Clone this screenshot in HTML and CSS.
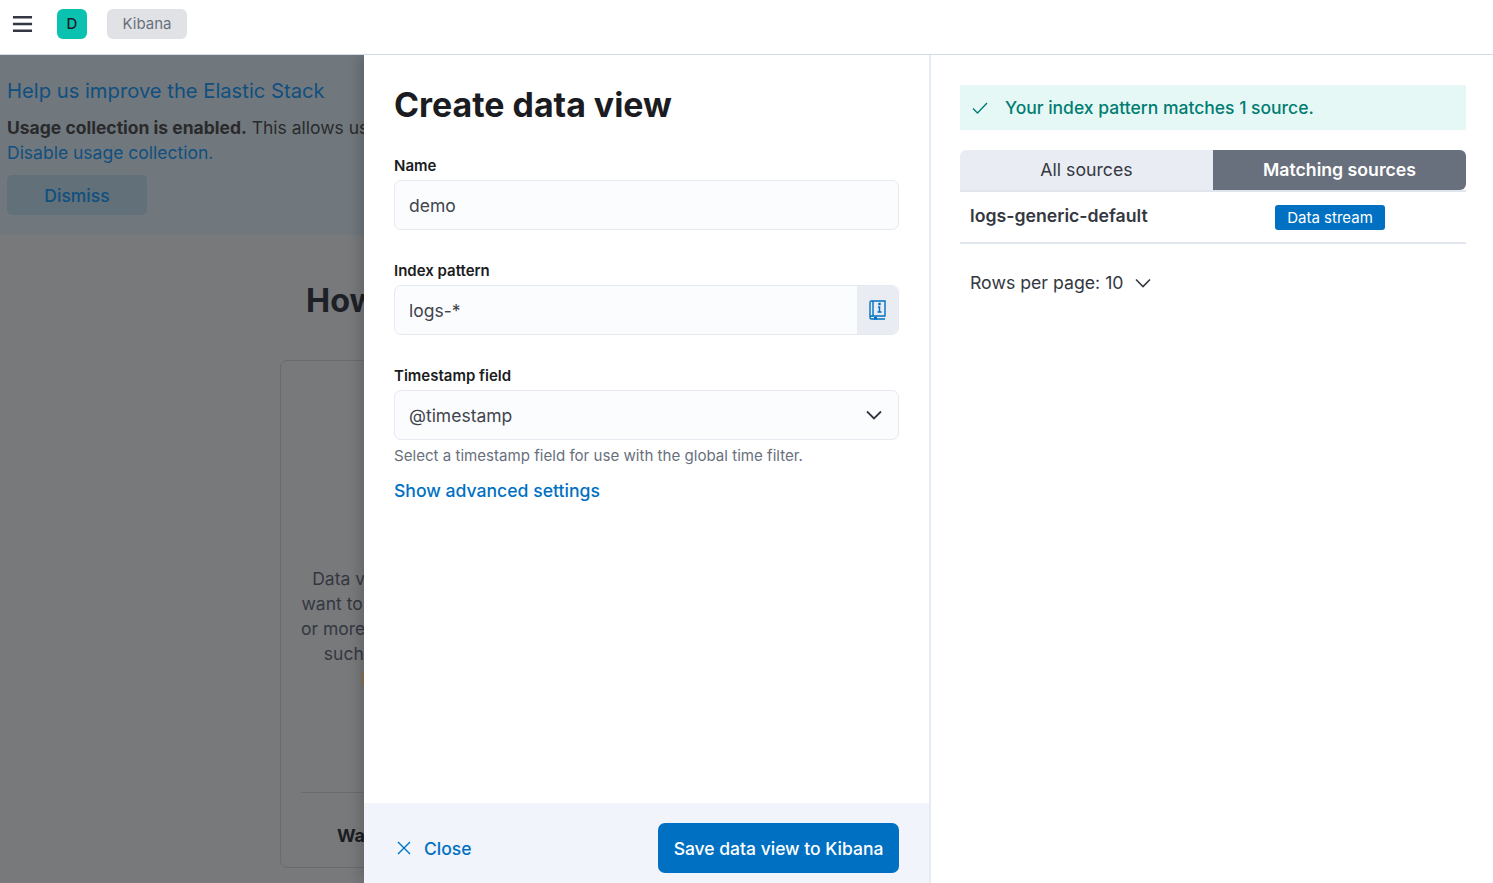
FILE: index.html
```html
<!DOCTYPE html>
<html>
<head>
  <meta charset="UTF-8">
  <meta name="viewport" content="width=device-width,initial-scale=1">
  <title>Create data view</title>
  <link rel="stylesheet" href="styles.css">
</head>
<body>
  <header class="topbar">
    <svg class="menuicon" width="22" height="18" viewBox="0 0 22 18">
      <path d="M1 2h20M1 9h20M1 16h20" stroke="#343741" stroke-width="2.6" fill="none"/>
    </svg>
    <div class="avatar">D</div>
    <div class="crumb">Kibana</div>
  </header>

  <div class="pagewrap">
    <!-- page behind the flyout, dimmed -->
    <main class="page">
      <section class="usagecallout">
        <h3 class="usagetitle">Help us improve the Elastic Stack</h3>
        <p class="usagetext"><b>Usage collection is enabled.</b> This allows us to learn what our users are most interested in, so we can improve our products and services.<br>
        <a class="usagelink">Disable usage collection.</a></p>
        <button class="dismiss">Dismiss</button>
      </section>
      <section class="intro">
        <h1 class="introtitle">How do you want to start</h1>
        <div class="introcard">
          <p class="introtext">Data views identify the Elasticsearch data you<br>want to explore. You can point data views to one<br>or more data streams, indices, and index aliases,<br>such as your log data from yesterday, or all<br><a class="introlink">indices that contain your log data.</a></p>
          <div class="introfoot"><b>Want to learn more about data views?</b></div>
        </div>
      </section>
    </main>

    <!-- flyout -->
    <aside class="flyout">
      <div class="formside">
        <div class="formbody">
          <h1 class="formtitle">Create data view</h1>

          <div class="field">
            <label class="fieldlabel">Name</label>
            <div class="control"><input class="textinput" type="text" value="demo"></div>
          </div>

          <div class="field">
            <label class="fieldlabel">Index pattern</label>
            <div class="control">
              <input class="textinput" type="text" value="logs-*">
              <div class="append">
                <svg width="20" height="22" viewBox="0 0 20 22" fill="none" stroke="#0071c2" stroke-width="1.4">
                  <path d="M3 18V3.500C3 2.500 3.700 2 4.500 2H18v15H4.500C3.700 17 3 17.500 3 18.500S3.700 20 4.500 20H18"/>
                  <path d="M6 2v15"/>
                  <path d="M11 8h1.500v5M10.500 13h4" stroke-width="1.500"/>
                  <path d="M12 4.500h1v1h-1z" fill="#0071c2"/>
                  <path d="M7 18h3v3l-1.500-1-1.500 1z" fill="#0071c2" stroke="none"/>
                </svg>
              </div>
            </div>
          </div>

          <div class="field">
            <label class="fieldlabel">Timestamp field</label>
            <div class="control">
              <input class="textinput" type="text" value="@timestamp">
              <svg class="selectchevron" width="16" height="10" viewBox="0 0 16 10">
                <path d="M1 1.500l7 7 7-7" stroke="#343741" stroke-width="1.800" fill="none"/>
              </svg>
            </div>
            <div class="fieldhelp">Select a timestamp field for use with the global time filter.</div>
          </div>

          <a class="advancedlink">Show advanced settings</a>
        </div>

        <footer class="formfoot">
          <a class="closelink">
            <svg width="14" height="14" viewBox="0 0 14 14">
              <path d="M1 1l12 12M13 1L1 13" stroke="#0071c2" stroke-width="1.400" fill="none"/>
            </svg>
            Close
          </a>
          <button class="savebtn">Save data view to Kibana</button>
        </footer>
      </div>

      <div class="sourceside">
        <div class="matchcallout">
          <svg width="16" height="12" viewBox="0 0 16 12">
            <path d="M1 6.500l4.500 4.500L15 1" stroke="#017d73" stroke-width="1.400" fill="none"/>
          </svg>
          Your index pattern matches 1 source.
        </div>

        <div class="tabs">
          <div class="tab">All sources</div>
          <div class="tab selected">Matching sources</div>
        </div>

        <div class="sourcerow">
          <div class="sourcename">logs-generic-default</div>
          <div class="sourcetype"><span class="badge">Data stream</span></div>
        </div>

        <div class="rowsperpage">
          Rows per page: 10
          <svg width="16" height="10" viewBox="0 0 16 10">
            <path d="M1 1.500l7 7 7-7" stroke="#343741" stroke-width="1.600" fill="none"/>
          </svg>
        </div>
      </div>
    </aside>
  </div>
</body>
</html>
```

FILE: styles.css
```css
html, body {
  margin: 0;
  height: 100%;
}

body {
  font-family: "Inter", "Liberation Sans", sans-serif;
  font-size: 17.5px;
  color: #343741;
  background: #fff;
  overflow: hidden;
}

p, h1, h3 {
  margin: 0;
}

/* top bar */

.topbar {
  height: 55px;
  box-sizing: border-box;
  display: flex;
  align-items: center;
  padding: 0 0 6px 12px;
  background: #fff;
  border-bottom: 1px solid #d3dae6;
}

.menuicon {
  width: 21px;
  margin-right: 24px;
}

.avatar {
  width: 30px;
  height: 30px;
  margin-right: 20px;
  border-radius: 6px;
  background: #0bc1b0;
  color: #1a1c21;
  font-size: 15px;
  font-weight: 500;
  line-height: 30px;
  text-align: center;
}

.crumb {
  width: 80px;
  height: 30px;
  border-radius: 6px;
  background: #e1e2e6;
  color: #69707d;
  font-size: 15px;
  line-height: 30px;
  text-align: center;
}

/* page behind the flyout */

.pagewrap {
  position: relative;
  height: 828px;
  overflow: hidden;
}

.page {
  height: 100%;
  background: #78797b;
}

.usagecallout {
  height: 180px;
  box-sizing: border-box;
  padding: 22px 7px 0;
  background: #70787d;
  white-space: nowrap;
}

.usagetitle {
  font-size: 20.2px;
  font-weight: 400;
  line-height: 28px;
  color: #104f7f;
}

.usagetext {
  margin-top: 10px;
  line-height: 25px;
  color: #2a2a2c;
}

.usagelink {
  color: #104f7f;
}

.dismiss {
  display: block;
  width: 140px;
  height: 40px;
  margin-top: 10px;
  border: none;
  border-radius: 5px;
  background: #617079;
  color: #104f7f;
  font-family: inherit;
  font-size: 17.5px;
  font-weight: 500;
}

.intro {
  width: 444px;
  margin-left: 280px;
}

.introtitle {
  height: 125px;
  padding-top: 46px;
  box-sizing: border-box;
  font-size: 32.3px;
  font-weight: 700;
  line-height: 40px;
  color: #1e2027;
  white-space: nowrap;
  text-align: center;
}

.introcard {
  height: 508px;
  box-sizing: border-box;
  padding: 205px 20px 0;
  border: 1px solid #696b6f;
  border-radius: 7px;
}

.introtext {
  height: 226px;
  line-height: 25px;
  text-align: center;
  white-space: nowrap;
}

.introlink {
  letter-spacing: 0.05px;
  color: #a0703c;
}

.introfoot {
  padding-top: 32px;
  border-top: 1px solid #696b6f;
  font-size: 18px;
  text-align: center;
  color: #1a1c21;
  white-space: nowrap;
}

/* flyout */

.flyout {
  position: absolute;
  top: 0;
  right: 0;
  bottom: 0;
  left: 364px;
  display: flex;
  background: #fff;
  box-shadow: -5px 0 12px rgba(0, 0, 0, 0.16);
}

.formside {
  width: 565px;
  display: flex;
  flex-direction: column;
  border-right: 2px solid #e6ebf4;
}

.formbody {
  flex: 1;
  padding: 27px 30px 0;
}

.formtitle {
  margin-bottom: 28px;
  font-size: 33.9px;
  font-weight: 700;
  line-height: 46px;
  color: #1a1c21;
}

.field {
  margin-bottom: 31px;
}

.fieldlabel {
  display: block;
  margin-bottom: 4px;
  font-size: 15px;
  font-weight: 600;
  line-height: 20px;
  color: #1a1c21;
}

.control {
  position: relative;
  display: flex;
  height: 50px;
  box-sizing: border-box;
  border: 1px solid #e6e9f0;
  border-radius: 7px;
  background: #fbfcfd;
  overflow: hidden;
}

.textinput {
  flex: 1;
  min-width: 0;
  padding: 0 14px;
  border: none;
  outline: none;
  background: transparent;
  color: #41444d;
  font-family: inherit;
  font-size: 17.5px;
}

.append {
  width: 39px;
  padding-right: 2px;
  display: flex;
  align-items: center;
  justify-content: center;
  background: #e9edf3;
}

.selectchevron {
  position: absolute;
  top: 19px;
  right: 16px;
}

.fieldhelp {
  margin-top: 6px;
  font-size: 15.1px;
  line-height: 20px;
  color: #69707d;
}

.advancedlink {
  display: block;
  margin-top: -19px;
  font-size: 17.6px;
  font-weight: 500;
  line-height: 25px;
  color: #0071c2;
}

.formfoot {
  height: 80px;
  box-sizing: border-box;
  display: flex;
  align-items: center;
  justify-content: space-between;
  padding: 20px 30px 10px 33px;
  background: #f1f4fa;
}

.closelink {
  display: flex;
  align-items: center;
  gap: 13px;
  font-weight: 500;
  color: #0071c2;
}

.savebtn {
  width: 241px;
  height: 50px;
  border: none;
  border-radius: 7px;
  background: #0071c2;
  color: #fff;
  font-family: inherit;
  font-size: 17.5px;
  font-weight: 500;
}

.sourceside {
  flex: 1;
  padding: 30px 27px 0 29px;
  font-size: 17.7px;
}

.matchcallout {
  height: 45px;
  display: flex;
  align-items: center;
  gap: 17px;
  padding-left: 12px;
  background: #e6f8f5;
  color: #017d73;
  font-size: 17.5px;
  font-weight: 500;
}

.tabs {
  display: flex;
  height: 40px;
  margin-top: 20px;
  border-bottom: 2px solid #e0e5ee;
}

.tab {
  flex: 1;
  border-radius: 6px 0 0 0;
  background: #e9edf3;
  line-height: 40px;
  text-align: center;
}

.tab.selected {
  border-radius: 0 6px 6px 0;
  background: #69707d;
  color: #fff;
  font-weight: 600;
}

.sourcerow {
  height: 50px;
  display: flex;
  align-items: center;
  padding-left: 10px;
  border-bottom: 2px solid #e0e5ee;
}

.sourcename {
  width: 305px;
  margin-top: -3px;
  font-weight: 600;
}

.badge {
  display: block;
  width: 110px;
  height: 25px;
  border-radius: 3px;
  background: #0071c2;
  color: #fff;
  font-size: 15px;
  line-height: 25px;
  text-align: center;
}

.rowsperpage {
  display: flex;
  align-items: center;
  gap: 11px;
  margin-top: 26px;
  padding-left: 10px;
  line-height: 25px;
}
```
